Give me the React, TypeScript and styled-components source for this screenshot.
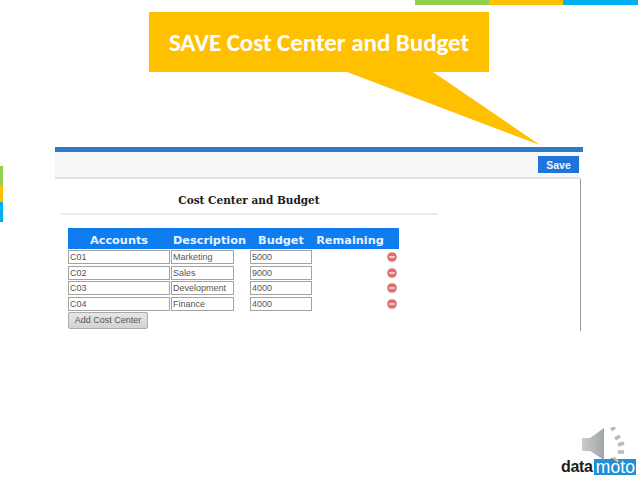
import React, { FunctionComponent } from "react";
import styled, { createGlobalStyle } from "styled-components";

const Global = createGlobalStyle`
  html, body {
    margin: 0;
    padding: 0;
    background: #fff;
  }
`;

const Slide = styled.div`
  position: relative;
  width: 638px;
  height: 479px;
  overflow: hidden;
  background: #fff;
  font-family: "Liberation Sans", Arial, sans-serif;
`;

const TopStripe = styled.div`
  display: flex;
  justify-content: flex-end;
  height: 5px;
`;

const StripePart = styled.div<{ $color: string; $w: number }>`
  width: ${({ $w }) => $w}px;
  background: ${({ $color }) => $color};
`;

const Callout = styled.div`
  width: 340px;
  height: 60px;
  margin: 7px 0 0 149px;
  display: flex;
  align-items: center;
  justify-content: center;
  background: #ffc000;
  color: #fff;
  font-family: Carlito, Lato, sans-serif;
  font-weight: 700;
  font-size: 25px;
  letter-spacing: -0.05px;
`;

const CalloutTail = styled.svg`
  position: absolute;
  left: 340px;
  top: 72px;
`;

const Body = styled.div`
  display: flex;
  margin-top: 75px;
`;

const SideStripe = styled.div`
  display: flex;
  flex-direction: column;
  width: 3px;
  margin: 19px 52px 0 0;
  height: 56px;
`;

const SidePart = styled.div<{ $color: string; $h: number }>`
  height: ${({ $h }) => $h}px;
  background: ${({ $color }) => $color};
`;

const Panel = styled.div`
  width: 528px;
  height: 184px;
  display: flex;
  flex-direction: column;
  border-top: 5px solid #2a7cc7;
  box-sizing: border-box;
`;

const Toolbar = styled.div`
  height: 27px;
  box-sizing: border-box;
  margin-right: 3px;
  display: flex;
  align-items: center;
  justify-content: flex-end;
  padding-right: 1px;
  background: #f5f6f8;
  border-bottom: 2px solid #dde3ea;
`;

const SaveButton = styled.button`
  width: 41px;
  height: 17px;
  padding: 0;
  border: 0;
  background: #1f74dc;
  color: #eef4fc;
  font-family: "Liberation Sans", sans-serif;
  font-weight: 700;
  font-size: 10.5px;
`;

const Content = styled.div`
  flex: 1;
  margin-right: 2px;
  padding: 14px 0 0 5px;
  border-right: 1px solid #9a9a9a;
`;

const Heading = styled.h1`
  width: 378px;
  height: 19px;
  margin: 0;
  padding-top: 1px;
  border-bottom: 2px solid #ececec;
  color: #1a1a1a;
  font-family: "DejaVu Serif", serif;
  font-size: 10.5px;
  font-weight: 700;
  text-align: center;
`;

const Table = styled.div`
  width: 331px;
  margin: 13px 0 0 8px;
`;

const HeaderRow = styled.div`
  display: flex;
  height: 21px;
  box-sizing: border-box;
  padding-top: 3px;
  align-items: center;
  background: #0f7cf0;
  color: #e8f4ff;
  font-family: "DejaVu Sans", sans-serif;
  font-weight: 700;
  font-size: 11.3px;
`;

const HeaderCell = styled.div<{ $w: number }>`
  width: ${({ $w }) => $w}px;
  text-align: center;
  white-space: nowrap;
`;

const Row = styled.div`
  display: flex;
  align-items: center;
  height: 15.7px;
`;

const Field = styled.div<{ $w: number; $gap: number }>`
  width: ${({ $w }) => $w}px;
  height: 14px;
  box-sizing: border-box;
  margin-right: ${({ $gap }) => $gap}px;
  padding-left: 1px;
  border: 1px solid #a3a3a3;
  background: #fff;
  color: #555;
  font-size: 9px;
  line-height: 12px;
`;

const RemoveIcon = styled.svg`
  margin-left: 75px;
`;

const AddButton = styled.button`
  display: block;
  width: 80px;
  height: 17px;
  padding: 0;
  border: 1px solid #aaa;
  border-radius: 2px;
  background: linear-gradient(#e6e6e6, #d2d2d2);
  color: #555;
  font-family: "Liberation Sans", sans-serif;
  font-size: 9px;
`;

const Footer = styled.div`
  position: absolute;
  right: 0;
  bottom: 0;
  width: 83px;
  height: 56px;
`;

const Speaker = styled.svg`
  position: absolute;
  left: 27px;
  top: 4px;
  z-index: 1;
`;

const Logo = styled.div`
  position: absolute;
  left: 6px;
  bottom: 4px;
  display: flex;
  align-items: center;
  height: 16px;
  font-weight: 700;
  line-height: 16px;
`;

const LogoDark = styled.span`
  color: #1c1c1c;
  font-size: 16px;
  letter-spacing: -0.3px;
  padding-right: 1px;
`;

const LogoBlue = styled.span`
  background: #1f8fd6;
  color: #fff;
  font-size: 17.5px;
  font-weight: 400;
  letter-spacing: 0.1px;
  padding: 0 1px 0 2px;
`;

const rows = [
  ["C01", "Marketing", "5000"],
  ["C02", "Sales", "9000"],
  ["C03", "Development", "4000"],
  ["C04", "Finance", "4000"],
];

const App: FunctionComponent = () => (
  <Slide>
    <Global />
    <TopStripe>
      <StripePart $color="#92d050" $w={74} />
      <StripePart $color="#ffc000" $w={74} />
      <StripePart $color="#00b0f0" $w={75} />
    </TopStripe>
    <Callout>SAVE Cost Center and Budget</Callout>
    <CalloutTail width="210" height="76" viewBox="0 0 210 76">
      <polygon points="7,0 93,0 200,73" fill="#ffc000" />
    </CalloutTail>
    <Body>
      <SideStripe>
        <SidePart $color="#92d050" $h={19} />
        <SidePart $color="#ffc000" $h={17} />
        <SidePart $color="#00b0f0" $h={20} />
      </SideStripe>
      <Panel>
        <Toolbar>
          <SaveButton>Save</SaveButton>
        </Toolbar>
        <Content>
          <Heading>Cost Center and Budget</Heading>
          <Table>
            <HeaderRow>
              <HeaderCell $w={102}>Accounts</HeaderCell>
              <HeaderCell $w={79}>Description</HeaderCell>
              <HeaderCell $w={64}>Budget</HeaderCell>
              <HeaderCell $w={74}>Remaining</HeaderCell>
            </HeaderRow>
            {rows.map(([code, name, budget]) => (
              <Row key={code}>
                <Field $w={102} $gap={1}>{code}</Field>
                <Field $w={63} $gap={16}>{name}</Field>
                <Field $w={62} $gap={0}>{budget}</Field>
                <RemoveIcon width="10" height="10" viewBox="0 0 10 10">
                  <circle cx="5" cy="5" r="4.8" fill="#dd716c" />
                  <rect x="2.5" y="4.2" width="5" height="1.6" fill="#fbeaea" />
                </RemoveIcon>
              </Row>
            ))}
            <AddButton>Add Cost Center</AddButton>
          </Table>
        </Content>
      </Panel>
    </Body>
    <Footer>
      <Speaker width="46" height="42" viewBox="0 0 46 42">
        <defs>
          <linearGradient id="cone" x1="0" x2="1" y1="0" y2="0">
            <stop offset="0" stopColor="#c9cbcc" />
            <stop offset="1" stopColor="#a2a6a8" />
          </linearGradient>
        </defs>
        <polygon points="0,11 8,11 22,1 22,33 8,24 0,24" fill="url(#cone)" />
        <g stroke="#b9bbbb" strokeWidth="3.5" fill="none">
          <line x1="29" y1="3" x2="33" y2="0" />
          <line x1="33" y1="12" x2="38" y2="9" />
          <line x1="36" y1="18" x2="42" y2="16" />
          <line x1="36" y1="25" x2="42" y2="25" />
          <line x1="31" y1="31" x2="36" y2="35" />
        </g>
        <path d="M29 31 L35 36" stroke="#555" strokeWidth="1" fill="none" />
      </Speaker>
      <Logo>
        <LogoDark>data</LogoDark>
        <LogoBlue>moto</LogoBlue>
      </Logo>
    </Footer>
  </Slide>
);

export default App;
